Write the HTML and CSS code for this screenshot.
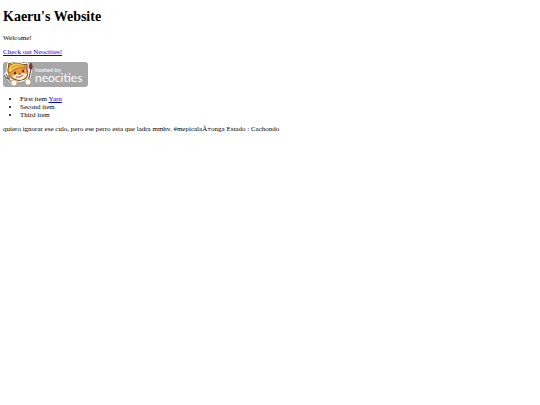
FILE: index.html
```
<!DOCTYPE html>
<html lang="en">
<head>
<meta charset="UTF-8">
<meta name="viewport" content="width=device-width, initial-scale=1.0">
<title>Kaeru's Website</title>
<link rel="stylesheet" href="styles.css">
</head>
<body>
<h1>Kaeru's Website</h1>

<p>Welcome!</p>

<p><a href="https://neocities.org">Check out Neocities!</a></p>

<p>
  <a class="badge" href="https://neocities.org" aria-label="Hosted by Neocities">
    <svg width="85" height="25" viewBox="0 0 85 25">
      <rect width="85" height="25" rx="3" fill="#a7a7a7"/>
      <!-- cat -->
      <path d="M6 1 L10 3 Q15 0 20 3 L24 2 L24 8 Q27 13 22 17 Q16 20 10 17 Q4 14 5 8 Z" fill="#f0953a" stroke="#fff" stroke-width="3" stroke-linejoin="round"/>
      <path d="M6 1 L10 3 Q15 0 20 3 L24 2 L24 8 Q27 13 22 17 Q16 20 10 17 Q4 14 5 8 Z" fill="#f0953a" stroke="#6b451e" stroke-width="1"/>
      <path d="M5 9 Q5 2 13 1 Q20 1 22 6 Q14 4 7 11 Z" fill="#f2c64a" stroke="#9a6c20" stroke-width="0.8"/>
      <path d="M8 6 Q13 2 19 4" fill="none" stroke="#c08c28" stroke-width="0.7"/>
      <path d="M9 14 Q13 12 16 12 Q20 10 24 12 Q23 16 18 18 Q12 18 9 14 Z" fill="#fbe9d2"/>
      <ellipse cx="12" cy="11" rx="1" ry="1.5" fill="#4b2a18"/>
      <ellipse cx="20" cy="9" rx="1" ry="1.5" fill="#4b2a18"/>
      <path d="M15 12 L18 11 L17 13 Z" fill="#70301c"/>
      <path d="M13 15 Q17 16 20 13" fill="none" stroke="#70301c" stroke-width="0.8"/>
      <!-- fork -->
      <path d="M1 12 L5 17 M3 10 L6 16 M5 16 L10 22" fill="none" stroke="#eee" stroke-width="2.5"/>
      <path d="M1 13 L3 16 L6 17 L6 13 M3 12 L5 16 L10 22" fill="none" stroke="#555" stroke-width="1"/>
      <!-- brush -->
      <path d="M28 6 L25 20" stroke="#fff" stroke-width="3"/>
      <path d="M28 7 L25 20" stroke="#87563a" stroke-width="1.2"/>
      <path d="M27 7 Q25 4 28 1 Q30 4 29 7 Z" fill="#a02c34" stroke="#592126" stroke-width="0.6"/>
      <circle cx="11" cy="21" r="3" fill="#fff" stroke="#c99050" stroke-width="0.7"/>
      <circle cx="25" cy="20" r="3" fill="#fff" stroke="#c99050" stroke-width="0.7"/>
      <text class="badge-small" x="32" y="10">hosted by</text>
      <text class="badge-name" x="32" y="20">neocities</text>
    </svg>
  </a>
</p>

<ul>
  <li>First item <a href="#">Yarn</a></li>
  <li>Second item</li>
  <li>Third item</li>
</ul>

<p>quiero ignorar ese culo, pero ese perro esta que ladra mmhv. #mepicalaÃ±onga Estado : Cachondo</p>
</body>
</html>
```
FILE: styles.css
```
body {
  font-family: "Liberation Serif", "Times New Roman", serif;
  font-size: 7px;
  line-height: 8px;
  color: #000;
  background-color: #fff;
  margin: 9px 3px;
}
h1 {
  font-size: 14px;
  line-height: 16px;
  margin: 0 0 9px;
}
p {
  margin: 6px 0;
}
a {
  color: #0000ee;
}
ul {
  margin: 8px 0 6px;
  padding-left: 17px;
}
.badge,
.badge svg {
  display: block;
}
.badge {
  width: 85px;
}
.badge text {
  font-family: Lato, sans-serif;
  fill: #fff;
}
.badge-small {
  font-size: 6px;
}
.badge-name {
  font-size: 12px;
}
```
